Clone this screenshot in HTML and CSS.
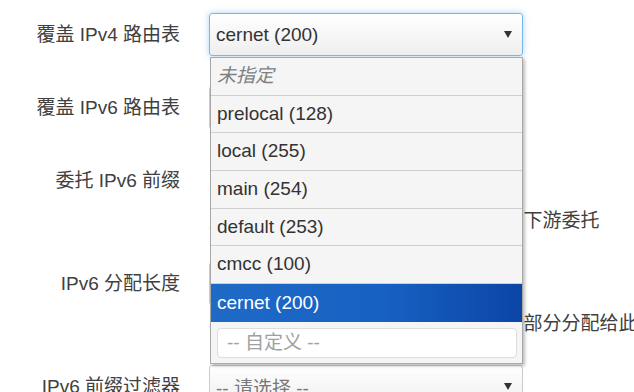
FILE: index.html
```html
<html>
<head>
    <meta charset="utf-8">
    <title>接口设置</title>
    <link rel="stylesheet" href="styles.css">
</head>
<body>
    <div class="cbi-form">
        <div class="cbi-row">
            <label class="cbi-label">覆盖 IPv4 路由表</label>
            <div class="cbi-field">
                <div class="dropdown-wrap">
                    <div class="cbi-select focus">
                        <span class="cbi-value">cernet (200)</span>
                        <span class="caret"></span>
                    </div>
                    <ul class="dropdown">
                        <li class="empty">未指定</li>
                        <li>prelocal (128)</li>
                        <li>local (255)</li>
                        <li>main (254)</li>
                        <li>default (253)</li>
                        <li>cmcc (100)</li>
                        <li class="selected">cernet (200)</li>
                        <li class="custom"><input type="text" placeholder="-- 自定义 --" /></li>
                    </ul>
                </div>
            </div>
        </div>

        <div class="cbi-row">
            <label class="cbi-label">覆盖 IPv6 路由表</label>
            <div class="cbi-field">
                <div class="cbi-select">
                    <span class="cbi-value">main (254)</span>
                    <span class="caret"></span>
                </div>
            </div>
        </div>

        <div class="cbi-row">
            <label class="cbi-label">委托 IPv6 前缀</label>
            <div class="cbi-field">
                <div class="cbi-check"><input type="checkbox" checked="checked" /></div>
                <div class="cbi-desc">允许在此接口上启用可用 IPv6 前缀的下游委托</div>
            </div>
        </div>

        <div class="cbi-row">
            <label class="cbi-label">IPv6 分配长度</label>
            <div class="cbi-field">
                <div class="cbi-input">64</div>
                <div class="cbi-desc">将给定长度的十六进制 IPv6 前缀的一部分分配给此接口</div>
            </div>
        </div>

        <div class="cbi-row">
            <label class="cbi-label">IPv6 前缀过滤器</label>
            <div class="cbi-field">
                <div class="cbi-select">
                    <span class="cbi-value placeholder">-- 请选择 --</span>
                    <span class="caret"></span>
                </div>
            </div>
        </div>
    </div>
</body>
</html>
```

FILE: styles.css
```css
body{
    margin: 0;
    background: #fff;
    font-family: "Liberation Sans", Arial, "Noto Sans CJK SC", sans-serif;
    font-size: 19px;
    color: #404040;
    overflow: hidden;
}

.cbi-form{
    padding-top: 13px;
}

.cbi-row{
    display: grid;
    grid-template-columns: 180px 314px;
    column-gap: 29px;
    margin-bottom: 30px;
}

.cbi-label{
    text-align: right;
    line-height: 43px;
    white-space: nowrap;
}

.cbi-field{
    min-width: 0;
}

.cbi-select,
.cbi-input{
    box-sizing: border-box;
    height: 43px;
    display: flex;
    align-items: center;
    padding: 0 8px 0 6px;
    border: 1px solid #ccc;
    border-radius: 3px;
    background: linear-gradient(#fff, #eee);
    color: #333;
}

.cbi-input{
    background: #fff;
}

.cbi-select.focus{
    border-color: #7ab5e6;
    box-shadow: 0 0 6px rgba(102, 175, 233, .55);
}

.cbi-value{
    flex: 1;
    white-space: nowrap;
}

.cbi-value.placeholder{
    color: #777;
}

.caret{
    width: 0;
    height: 0;
    border-left: 4px solid transparent;
    border-right: 4px solid transparent;
    border-top: 7px solid #333;
    margin-right: 2px;
}

.cbi-check{
    height: 43px;
    display: flex;
    align-items: center;
}

.cbi-desc{
    margin-top: 8px;
    line-height: 22px;
    white-space: nowrap;
}

/* open dropdown of the first select */
.dropdown-wrap{
    position: relative;
}

.dropdown{
    position: absolute;
    top: 44px;
    left: 1px;
    right: 0;
    z-index: 10;
    margin: 0;
    padding: 0;
    list-style: none;
    background: #f5f5f5;
    border: 1px solid #a8a8a8;
    box-shadow: 2px 2px 3px rgba(0, 0, 0, .25);
}

.dropdown li{
    height: 36.7px;
    line-height: 36.7px;
    padding: 0 6px;
    border-bottom: 1px solid #cfcfcf;
    color: #333;
    white-space: nowrap;
}

.dropdown li.empty{
    font-style: italic;
    color: #808080;
}

.dropdown li.selected{
    border-bottom: none;
    height: 37.7px;
    line-height: 37.7px;
    background: linear-gradient(90deg, #1f69c7, #1761c2 55%, #0b45a6);
    color: #fff;
}

.dropdown li.custom{
    height: auto;
    line-height: normal;
    padding: 6px 5px 5px 6px;
    border-bottom: none;
}

.custom input{
    box-sizing: border-box;
    width: 100%;
    height: 30px;
    padding: 0 9px;
    border: 1px solid #ddd;
    border-radius: 4px;
    background: #fff;
    font-family: inherit;
    font-size: 19px;
    color: #333;
}

.custom input::placeholder{
    color: #a0a0a0;
}
```
